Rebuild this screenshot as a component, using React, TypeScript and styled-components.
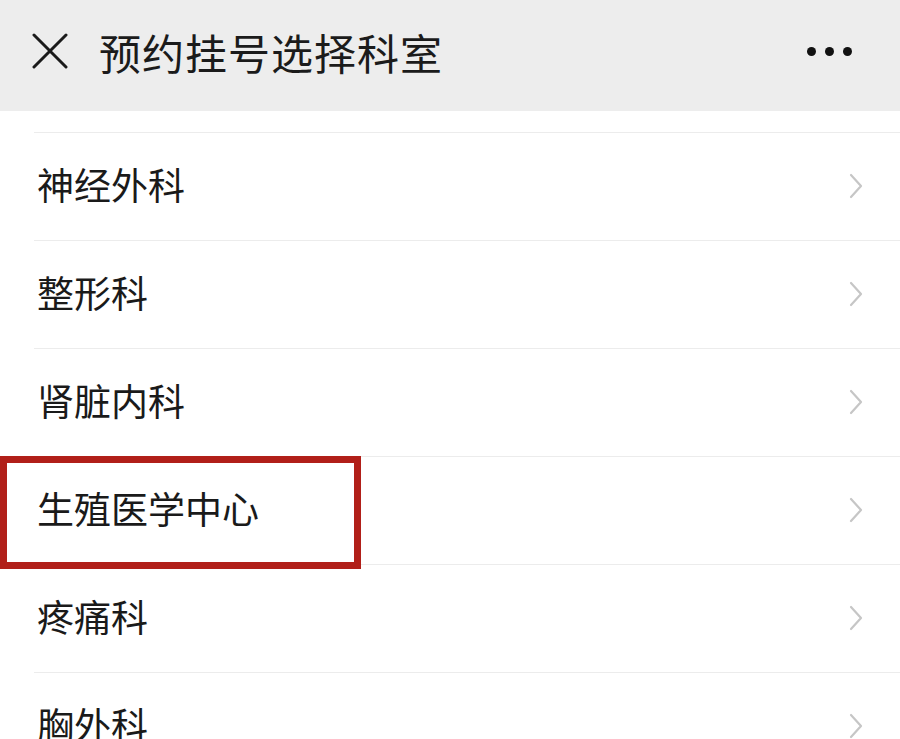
import React from "react";
import styled, { createGlobalStyle } from "styled-components";

const Global = createGlobalStyle`
  html, body { margin: 0; padding: 0; background: #ffffff; }
  body { font-family: "Noto Sans CJK SC", "Noto Sans", sans-serif; overflow: hidden; }
`;

const Page = styled.div`
  width: 900px;
  height: 739px;
  overflow: hidden;
  background: #ffffff;
  display: flex;
  flex-direction: column;
`;

const Header = styled.header`
  height: 111px;
  flex: none;
  background: #ededed;
  display: flex;
  align-items: center;
  padding: 0 48px 0 32px;
  box-sizing: border-box;
`;

const IconButton = styled.div`
  width: 36px;
  height: 36px;
  display: flex;
  align-items: center;
  justify-content: center;
  margin-top: -9px;
`;

const Title = styled.h1`
  margin: -8px 0 0 31px;
  font-size: 42px;
  font-weight: 400;
  color: #1b1b1b;
  letter-spacing: 1px;
  flex: 1;
  line-height: 1;
`;

const Dots = styled.div`
  display: flex;
  gap: 9px;
  margin-top: -9px;
`;

const Dot = styled.span`
  width: 9px;
  height: 9px;
  border-radius: 50%;
  background: #111;
`;

const List = styled.ul`
  list-style: none;
  margin: 0;
  padding: 0;
  flex: 1;
`;

const TopSpacer = styled.li`
  height: 21px;
  margin-left: 34px;
  border-bottom: 1px solid #ececec;
`;

const Row = styled.li`
  position: relative;
  height: 108px;
  display: flex;
  align-items: center;
  padding-left: 37px;
  padding-right: 36px;
  box-sizing: border-box;
  &::after {
    content: "";
    position: absolute;
    left: 34px;
    right: 0;
    bottom: 0;
    height: 1px;
    background: #ececec;
  }
`;

const Label = styled.span`
  flex: 1;
  font-size: 37px;
  color: #1a1a1a;
  line-height: 1;
  margin-top: -6px;
`;

const Highlight = styled.div`
  position: absolute;
  left: 0;
  top: -1px;
  width: 361px;
  height: 113px;
  border: 7px solid #b11f19;
  box-sizing: border-box;
  z-index: 2;
`;

const Chevron = () => (
  <svg width="16" height="26" viewBox="0 0 16 26" style={{ marginTop: -2 }}>
    <path d="M3 2 L13 13 L3 24" fill="none" stroke="#c6c6c6" strokeWidth="2.2" strokeLinecap="round" strokeLinejoin="round" />
  </svg>
);

const items = ["神经外科", "整形科", "肾脏内科", "生殖医学中心", "疼痛科", "胸外科"];

export default function App() {
  return (
    <>
      <Global />
      <Page>
        <Header>
          <IconButton>
            <svg width="36" height="36" viewBox="0 0 36 36">
              <path d="M2 2 L34 34 M34 2 L2 34" stroke="#1b1b1b" strokeWidth="3" strokeLinecap="round" />
            </svg>
          </IconButton>
          <Title>预约挂号选择科室</Title>
          <Dots>
            <Dot />
            <Dot />
            <Dot />
          </Dots>
        </Header>
        <List>
          <TopSpacer />
          {items.map((t) => (
            <Row key={t}>
              {t === "生殖医学中心" && <Highlight />}
              <Label>{t}</Label>
              <Chevron />
            </Row>
          ))}
        </List>
      </Page>
    </>
  );
}
